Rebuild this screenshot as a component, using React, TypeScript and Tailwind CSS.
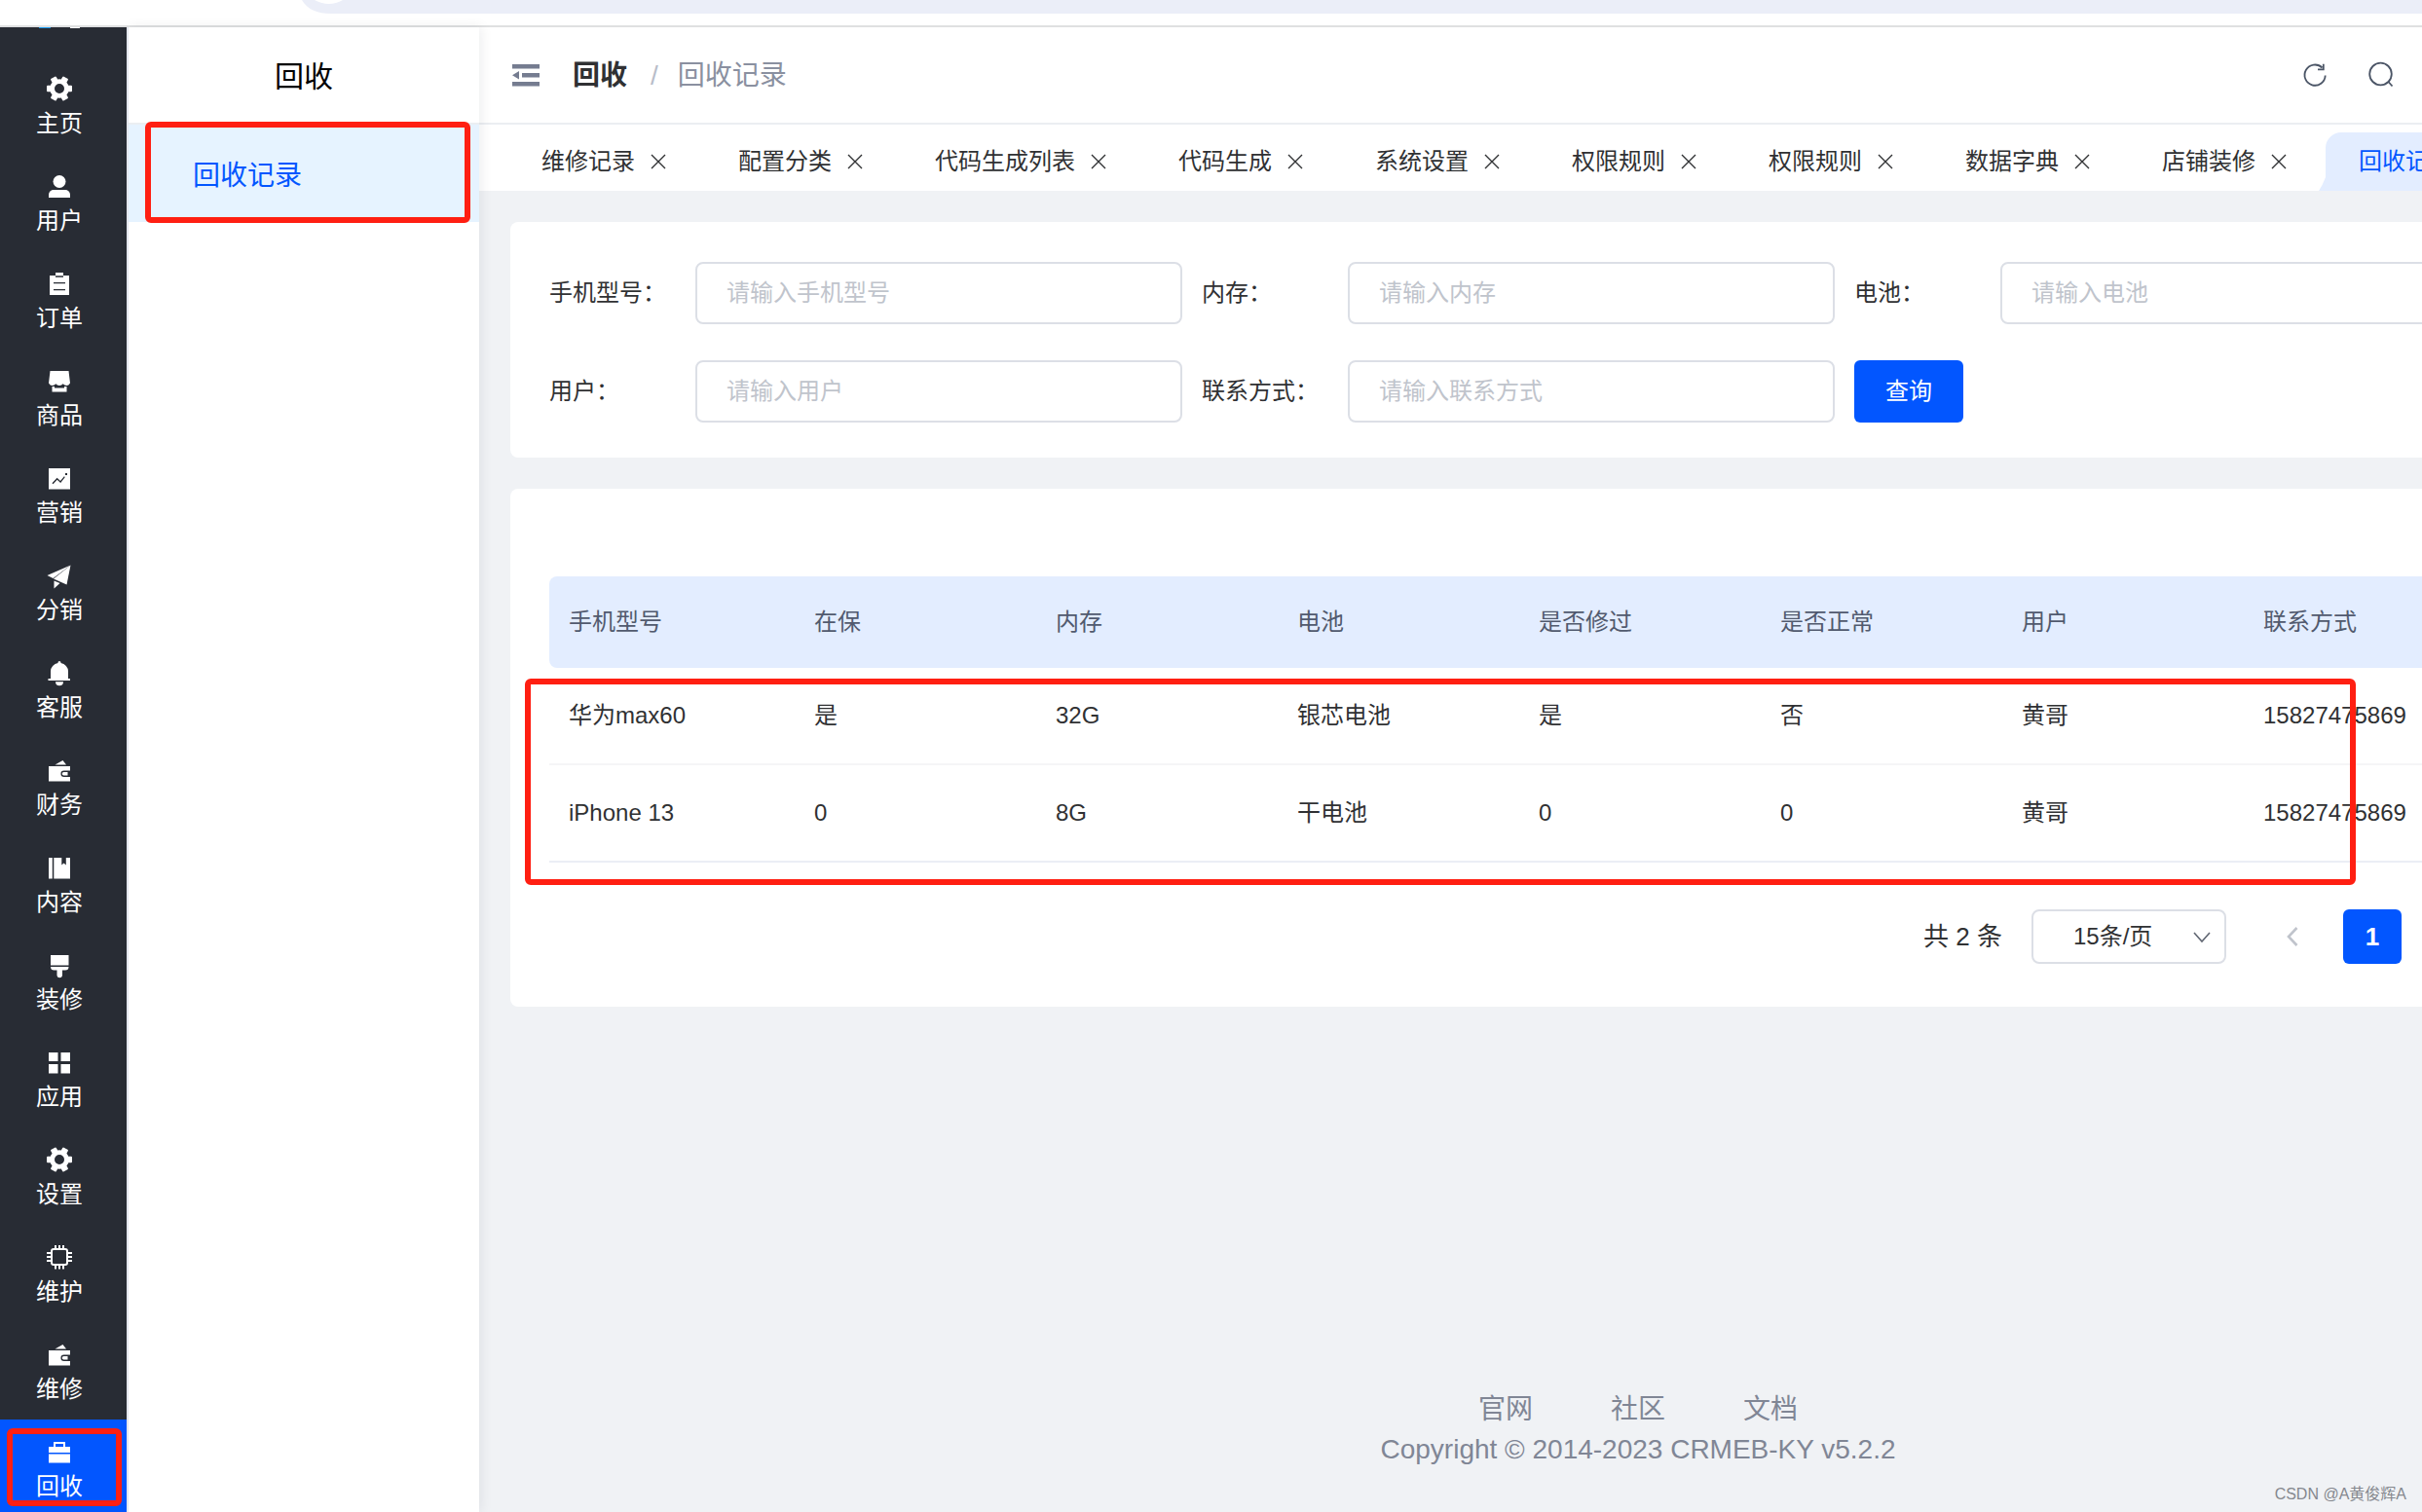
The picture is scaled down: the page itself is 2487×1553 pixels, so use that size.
import type { ReactNode } from 'react';

const icons: Record<string, ReactNode> = {
  gear: (
    <>
      <circle cx="14" cy="14" r="7.4" fill="none" stroke="currentColor" strokeWidth="4.8" />
      {[0, 60, 120, 180, 240, 300].map((a) => (
        <rect key={a} x="21.5" y="10.8" width="5.5" height="6.4" rx="1" transform={`rotate(${a} 14 14)`} />
      ))}
    </>
  ),
  user: (
    <>
      <circle cx="14" cy="9.5" r="6.5" />
      <path d="M3 26v-3a5 5 0 0 1 5-5h12a5 5 0 0 1 5 5v3z" />
    </>
  ),
  order: (
    <path
      fillRule="evenodd"
      d="M10 3h8v3h6v20H4V6h6zM10 6.2v1.6h8V6.2zM8 13v1.2h12V13zM8 20v1.2h12V20z"
    />
  ),
  goods: (
    <>
      <path d="M4.5 4h19L25 16.500q-1.500 2.500-3.600 2.500-2.300 0-3.700-1.800Q16.300 19 14 19t-3.700-1.800Q8.900 19 6.600 19 4.500 19 3 16.500z" />
      <path d="M6.500 20h2.500v1.500h10V20h2.500v5.500h-15z" />
    </>
  ),
  marketing: (
    <path
      fillRule="evenodd"
      d="M3 4h22v21.500H3zM6.500 19.300l1 .9 4.200-4.400 3.500 3.200 4.600-6-.9-.8-3.900 4.700-3.400-3.100zM20 9v2h2V9z"
    />
  ),
  plane: (
    <>
      <path d="M25.500 3.500L1.500 14l6 3z" />
      <path d="M25.500 3.500L8 17.500l13.500 6z" />
      <path d="M8.500 19.500l6 2.500-6 5.500z" />
    </>
  ),
  bell: (
    <>
      <path d="M12.500 3.500a1.500 1.500 0 0 1 3 0v.6A8.500 8.500 0 0 1 23 12.500V20h2v2H2.500v-2h2.500v-7.500a8.500 8.500 0 0 1 7.500-8.400z" />
      <path d="M10 23.300h8a4 4 0 0 1-8 0z" />
    </>
  ),
  wallet: (
    <>
      <path d="M9.500 8.500L17.500 4l3.500 4.500z" />
      <path d="M3 10h22v4.500h-6.300a3 3 0 0 0 0 6.500H25v4.500H3z" />
      <path d="M18.500 16h4v3.500h-4a1.700 1.700 0 0 1 0-3.500z" />
    </>
  ),
  book: (
    <>
      <path d="M3 4h3.800v21.500H3z" />
      <path d="M8.300 4h8v7.500l2.200-2 2.300 2V4H25v21.500H8.300z" />
    </>
  ),
  brush: (
    <>
      <path d="M5 4h18.500v10.500H5z" />
      <path d="M5 16h18.500q0 3.500-3.500 3.500h-3V25a2.800 2.800 0 0 1-5.500 0v-5.500H8.500Q5 19.500 5 16z" />
    </>
  ),
  apps: (
    <>
      <rect x="3" y="4" width="9.500" height="9" />
      <rect x="15.500" y="4" width="9.500" height="9" />
      <rect x="3" y="16" width="9.500" height="9.500" />
      <rect x="15.500" y="16" width="9.500" height="9.500" />
    </>
  ),
  cpu: (
    <g fill="none" stroke="currentColor" strokeWidth="2">
      <rect x="6" y="6" width="16" height="16" rx="2" />
      <path d="M10 2v4M14 2v4M18 2v4M10 22v4.500M14 22v4.500M18 22v4.500M1 10h5M1 14h5M1 18h5M22 10h5M22 14h5M22 18h5" />
    </g>
  ),
  briefcase: (
    <>
      <path fillRule="evenodd" d="M8 4h12v5h5v6H3V9h5zM10 6v3h8V6z" />
      <path d="M3 16.500h22v9H3z" />
    </>
  ),
};

const menu = [
  ['主页', 'gear'],
  ['用户', 'user'],
  ['订单', 'order'],
  ['商品', 'goods'],
  ['营销', 'marketing'],
  ['分销', 'plane'],
  ['客服', 'bell'],
  ['财务', 'wallet'],
  ['内容', 'book'],
  ['装修', 'brush'],
  ['应用', 'apps'],
  ['设置', 'gear'],
  ['维护', 'cpu'],
  ['维修', 'wallet'],
  ['回收', 'briefcase'],
];

const tabs = ['维修记录', '配置分类', '代码生成列表', '代码生成', '系统设置', '权限规则', '权限规则', '数据字典', '店铺装修'];

const columns = ['手机型号', '在保', '内存', '电池', '是否修过', '是否正常', '用户', '联系方式'];

const records = [
  ['华为max60', '是', '32G', '银芯电池', '是', '否', '黄哥', '15827475869'],
  ['iPhone 13', '0', '8G', '干电池', '0', '0', '黄哥', '15827475869'],
];

function BrowserEdge() {
  return (
    <div className="h-7 shrink-0 overflow-hidden border-b-2 border-[#dfe0e1] bg-white pl-[306px]">
      <svg viewBox="0 0 60 14" className="float-left h-[14px] w-[60px]" aria-hidden="true">
        <path d="M4 0Q12 14 34 14H60V0z" fill="#ebeef8" />
        <path d="M17 0Q32 8 46 0z" fill="#fff" />
      </svg>
      <div className="h-[14px] overflow-hidden bg-[#ebeef8]" />
    </div>
  );
}

function Sidebar() {
  return (
    <nav className="w-[132px] shrink-0 overflow-hidden border-r-2 border-[#e9ecf3] bg-[#282c34] text-white">
      <div className="flex h-[30px] gap-5 pl-10">
        <div className="h-px w-3 bg-[#1a9bf0]" />
        <div className="h-px w-2.5 bg-white" />
      </div>
      {menu.map(([label, icon]) => (
        <a
          key={label}
          href="#"
          className={
            label === '回收'
              ? 'relative flex h-[100px] flex-col items-center bg-[#0256ff] pt-[19px] pr-2'
              : 'flex h-[100px] flex-col items-center pt-[19px] pr-2'
          }
        >
          <svg viewBox="0 0 28 28" className="h-7 w-7" fill="currentColor" aria-hidden="true">
            {icons[icon]}
          </svg>
          <span className="mt-2 text-2xl leading-7">{label}</span>
          {label === '回收' && (
            <span className="absolute top-[9px] left-[7px] h-20 w-[118px] rounded-md border-6 border-[#ff1f12]" />
          )}
        </a>
      ))}
    </nav>
  );
}

function SubMenu() {
  return (
    <aside className="z-10 w-[360px] shrink-0 bg-white shadow-[2px_0_12px_rgba(0,21,41,0.08)]">
      <h2 className="flex h-[100px] items-center justify-center border-b-2 border-[#ebeef2] pt-0.5 text-[30px] text-black">
        回收
      </h2>
      <a href="#" className="relative flex h-[100px] items-center bg-[#e6f3ff] pt-1.5 pl-[66px] text-[28px] text-[#0256ff]">
        回收记录
        <span className="absolute -top-[3px] left-[17px] h-[104px] w-[334px] rounded-md border-6 border-[#ff1f12]" />
      </a>
    </aside>
  );
}

function Header() {
  return (
    <header className="flex h-[100px] shrink-0 items-center border-b-2 border-[#ebeef2] bg-white pr-7 pl-[34px]">
      <button aria-label="收起菜单" className="text-[#757c90]">
        <svg viewBox="0 0 28 24" className="h-6 w-7" fill="currentColor">
          <path d="M0 1h28v4.500H0zM10 10h18v4.500H10zM0 19h28v4.500H0zM0 12.200l7-4.200v8.500z" />
        </svg>
      </button>
      <nav className="ml-[34px] flex items-center pt-0.5 text-[28px] leading-10 text-[#8a90a0]">
        <a href="#" className="font-bold text-[#303133]">回收</a>
        <span className="mr-5 ml-6 text-[#b8bdc9]">/</span>
        <span>回收记录</span>
      </nav>
      <div className="ml-auto flex items-center gap-10 text-[#4b5566]">
        <button aria-label="刷新">
          <svg viewBox="0 0 28 28" className="h-7 w-7" fill="none" stroke="currentColor" strokeWidth="1.800">
            <path d="M24.700 14.500A10.600 10.600 0 1 1 21.500 6.500M22.800 2.800v5.500h-5.800" />
          </svg>
        </button>
        <button aria-label="搜索">
          <svg viewBox="0 0 28 28" className="h-7 w-7" fill="none" stroke="currentColor" strokeWidth="1.800">
            <ellipse cx="13.500" cy="13" rx="11.300" ry="11.300" />
            <path d="M21.500 21l4 4.500" />
          </svg>
        </button>
      </div>
    </header>
  );
}

function Cross() {
  return (
    <svg viewBox="0 0 24 24" className="h-6 w-6" fill="none" stroke="currentColor" strokeWidth="1.400">
      <path d="M5 5l14 14M19 5l-14 14" />
    </svg>
  );
}

function Tabs() {
  return (
    <div className="flex h-[68px] shrink-0 overflow-hidden bg-white pt-2 pl-[30px] text-2xl text-[#303133]">
      {tabs.map((tab, i) => (
        <div key={i} className="flex shrink-0 items-center gap-3 pr-9 pl-[34px]">
          <a href="#">{tab}</a>
          <button aria-label={`关闭${tab}`}>
            <Cross />
          </button>
        </div>
      ))}
      <div className="relative flex shrink-0 items-center gap-3 rounded-t-2xl bg-[#e3edff] pr-9 pl-[34px] text-[#0256ff]">
        <svg viewBox="0 0 7 14" className="absolute bottom-0 -left-[7px] h-[14px] w-[7px]" fill="#e3edff">
          <path d="M7 0Q4 8 0 14h7z" />
        </svg>
        <a href="#">回收记录</a>
        <button aria-label="关闭回收记录">
          <Cross />
        </button>
      </div>
    </div>
  );
}

function Field({ id, label }: { id: string; label: string }) {
  return (
    <div className="flex items-center">
      <label htmlFor={id} className="w-[150px] shrink-0 text-2xl text-[#303133]">
        {label}：
      </label>
      <input
        id={id}
        placeholder={`请输入${label}`}
        className="h-16 w-[500px] rounded-lg border-2 border-[#dcdfe6] px-[30px] text-2xl placeholder:text-[#c0c4cc]"
      />
    </div>
  );
}

function SearchCard() {
  return (
    <form className="grid grid-cols-[repeat(3,650px)] gap-x-5 gap-y-[37px] rounded-lg bg-white px-10 pt-[41px] pb-9">
      <Field id="model" label="手机型号" />
      <Field id="memory" label="内存" />
      <Field id="battery" label="电池" />
      <Field id="user" label="用户" />
      <Field id="contact" label="联系方式" />
      <button type="button" className="h-16 w-28 rounded-md bg-[#0256ff] text-2xl text-white">
        查询
      </button>
    </form>
  );
}

function RecordsCard() {
  return (
    <section className="rounded-lg bg-white px-10 pt-[90px] pb-11">
      <div className="relative">
        <table className="w-full table-fixed border-separate border-spacing-0 text-left text-2xl text-[#303133]">
          <colgroup>
            <col className="w-[252px]" />
            {columns.map((c) => (
              <col key={c} />
            ))}
          </colgroup>
          <thead>
            <tr className="h-[94px] text-[#515a6e]">
              {columns.map((c) => (
                <th key={c} scope="col" className="bg-[#e3edff] pl-5 font-normal first:rounded-l-lg">
                  {c}
                </th>
              ))}
              <td className="rounded-r-lg bg-[#e3edff]" />
            </tr>
          </thead>
          <tbody>
            {records.map((row) => (
              <tr key={row[0]} className="group h-[100px]">
                {row.map((cell, i) => (
                  <td key={i} className="border-b-2 border-[#f5f5f7] pl-5 group-last:border-[#ebeef5]">
                    {cell}
                  </td>
                ))}
                <td className="border-b-2 border-[#f5f5f7] group-last:border-[#ebeef5]" />
              </tr>
            ))}
          </tbody>
        </table>
        <div className="pointer-events-none absolute top-[105px] -left-[25px] h-[212px] w-[1880px] rounded-md border-6 border-[#ff1f12]" />
      </div>
      <div className="mt-12 flex items-center justify-end pr-[334px] text-[#303133]">
        <span className="text-[26px]">共 2 条</span>
        <div className="relative ml-[30px]">
          <select
            aria-label="每页条数"
            className="h-14 w-[200px] appearance-none rounded-lg border-2 border-[#dcdfe6] bg-white pl-[41px] text-2xl"
          >
            <option>15条/页</option>
          </select>
          <svg
            viewBox="0 0 18 12"
            className="pointer-events-none absolute top-[23px] right-4 h-3 w-[18px]"
            fill="none"
            stroke="#606672"
            strokeWidth="1.600"
          >
            <path d="M1 1l8 9 8-9" />
          </svg>
        </div>
        <button aria-label="上一页" className="ml-14 flex w-6 justify-center">
          <svg viewBox="0 0 12 20" className="h-5 w-3" fill="none" stroke="#c0c4cc" strokeWidth="2.600">
            <path d="M10.500 1L2 10l8.500 9" />
          </svg>
        </button>
        <button className="ml-10 h-14 w-[60px] rounded-md bg-[#0256ff] text-[26px] font-bold text-white">1</button>
      </div>
    </section>
  );
}

function Footer() {
  return (
    <footer className="mt-auto pb-[43px] text-center text-[28px] text-[#808695]">
      <nav className="flex justify-center gap-20 leading-10">
        <a href="#">官网</a>
        <a href="#">社区</a>
        <a href="#">文档</a>
      </nav>
      <p className="leading-[42px]">Copyright © 2014-2023 CRMEB-KY v5.2.2</p>
    </footer>
  );
}

export default function App() {
  return (
    <div
      lang="zh-CN"
      className="relative flex h-screen flex-col overflow-hidden bg-[#f0f2f5] font-['Liberation_Sans','Noto_Sans_CJK_SC',sans-serif]"
    >
      <BrowserEdge />
      <div className="flex min-h-0 flex-1">
        <Sidebar />
        <SubMenu />
        <div className="flex min-w-0 flex-1 flex-col overflow-hidden">
          <Header />
          <Tabs />
          <main className="flex min-w-[2380px] flex-1 flex-col gap-8 px-8 pt-8">
            <SearchCard />
            <RecordsCard />
            <Footer />
          </main>
        </div>
      </div>
      <span className="absolute right-4 bottom-1.5 text-base text-[#85888e]">CSDN @A黄俊辉A</span>
    </div>
  );
}
